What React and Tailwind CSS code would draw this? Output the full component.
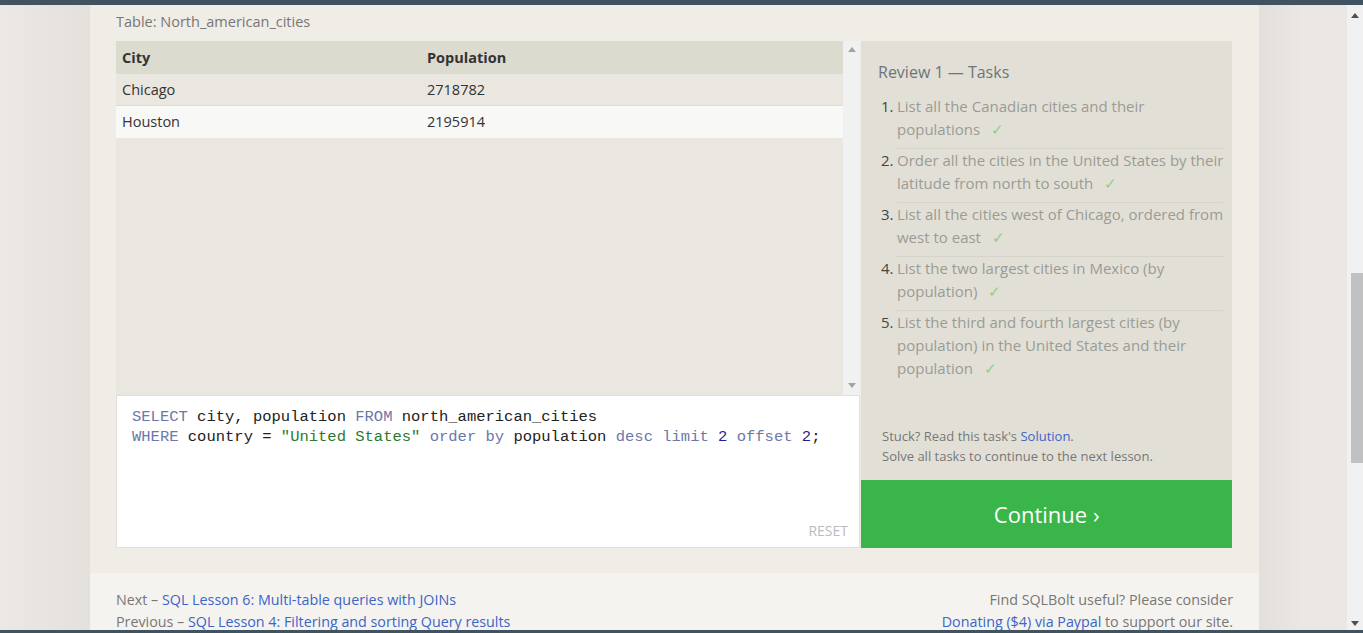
import React from "react";

const sans = { fontFamily: '"Open Sans", "Noto Sans", Arial, sans-serif' };

function Check() {
  return <span className="ml-[11px] text-[#8ccf8c]">✓</span>;
}

const tasks = [
  ["List all the Canadian cities and their", "populations"],
  ["Order all the cities in the United States by their", "latitude from north to south"],
  ["List all the cities west of Chicago, ordered from", "west to east"],
  ["List the two largest cities in Mexico (by", "population)"],
  ["List the third and fourth largest cities (by", "population) in the United States and their", "population"],
];

function Tri({ up }) {
  return (
    <svg width="8" height="5" viewBox="0 0 8 5">
      {up ? <path d="M0 5 L4 0 L8 5 Z" fill="#a3a3a3" /> : <path d="M0 0 L4 5 L8 0 Z" fill="#a3a3a3" />}
    </svg>
  );
}

export default function App() {
  return (
    <div className="w-[1363px] h-[633px] overflow-hidden flex flex-col bg-[#ebe7e4]" style={sans}>
      <div className="h-[5px] bg-[#3f5361] shrink-0" />
      <div className="flex flex-1 min-h-0">
        <div className="w-[90px] shrink-0 bg-gradient-to-r from-[#ece8e5] to-[#e4e0dc]" />
        <div className="w-[1169px] shrink-0 flex flex-col bg-[#f0ede6]">
          <div className="pl-[26px] pr-[27px] flex flex-col">
            <div className="h-[36px] flex items-center text-[14.5px] text-[#777] leading-none pb-[2px]">Table: North_american_cities</div>
            <div className="flex">
              <div className="w-[744px] flex flex-col">
                <div className="h-[354px] flex bg-[#e9e7df]">
                  <div className="w-[727px] flex flex-col">
                    <div className="h-[33px] flex items-center bg-[#dcdbd0] text-[14.5px] font-bold text-[#333]">
                      <div className="w-[311px] pl-[6px]">City</div>
                      <div>Population</div>
                    </div>
                    <div className="h-[32px] flex items-center text-[14.5px] text-[#333] border-b border-[#dddcd4] pt-[1px]">
                      <div className="w-[311px] pl-[6px]">Chicago</div>
                      <div>2718782</div>
                    </div>
                    <div className="h-[32px] flex items-center bg-[#f8f8f7] text-[14.5px] text-[#333]">
                      <div className="w-[311px] pl-[6px]">Houston</div>
                      <div>2195914</div>
                    </div>
                  </div>
                  <div className="w-[17px] bg-[#f1f1f1] flex flex-col items-center justify-between pt-[6px] pb-[7px]">
                    <Tri up />
                    <Tri />
                  </div>
                </div>
                <div className="h-[153px] bg-white border border-[#e2e0da] flex flex-col pl-[15px] pr-[11px] pt-[11px] pb-[9px]">
                  <div className="text-[15.5px] leading-[20px] text-[#222] whitespace-pre" style={{ fontFamily: '"Liberation Mono", "DejaVu Sans Mono", monospace' }}>
                    <div>
                      <span className="text-[#6c78a8]">SELECT</span> city, population <span className="text-[#6c78a8]">FROM</span> north_american_cities
                    </div>
                    <div>
                      <span className="text-[#6c78a8]">WHERE</span> country = <span className="text-[#2b7a2b]">"United States"</span>{" "}
                      <span className="text-[#6c78a8]">order by</span> population <span className="text-[#6c78a8]">desc limit</span>{" "}
                      <span className="text-[#1e1e8c]">2</span> <span className="text-[#6c78a8]">offset</span>{" "}
                      <span className="text-[#1e1e8c]">2</span>;
                    </div>
                  </div>
                  <div className="mt-auto self-end text-[14px] text-[#bbbbbb] leading-none">RESET</div>
                </div>
              </div>
              <div className="w-[372px] ml-[1px] flex flex-col">
                <div className="h-[439px] bg-[#e2e0d6] flex flex-col pl-[17px] pr-[9px] pt-[20px] pb-[14px]">
                  <div className="text-[16px] leading-[22px] text-[#6f747a]">Review 1 — Tasks</div>
                  <div className="mt-[12px] flex flex-col">
                    {tasks.map((lines, i) => (
                      <div key={i} className="flex">
                        <div className="w-[19px] pl-[3px] text-[15px] leading-[23px] text-[#444]">{i + 1}.</div>
                        <div className={"flex-1 pb-[7px] text-[15px] leading-[23px] text-[#9b9b95] " + (i < tasks.length - 1 ? "border-b border-[#d6d4ca]" : "")}>
                          {lines.map((l, j) => (
                            <div key={j} className="whitespace-nowrap">
                              {l}
                              {j === lines.length - 1 && <Check />}
                            </div>
                          ))}
                        </div>
                      </div>
                    ))}
                  </div>
                  <div className="mt-auto pl-[4px] text-[13px] leading-[20px] text-[#777]">
                    <div>
                      Stuck? Read this task's <span className="text-[#3b65c7]">Solution</span>.
                    </div>
                    <div>Solve all tasks to continue to the next lesson.</div>
                  </div>
                </div>
                <div className="h-[68px] bg-[#3ab54a] flex items-center justify-center text-white text-[22px]">Continue ›</div>
              </div>
            </div>
          </div>
          <div className="mt-[25px] flex-1 bg-[#f5f3ef] pl-[26px] pr-[26px] pt-[16px] flex justify-between text-[14.3px] leading-[22px] text-[#777]">
            <div>
              <div>
                Next – <span className="text-[#3b65c7]">SQL Lesson 6: Multi-table queries with JOINs</span>
              </div>
              <div>
                Previous – <span className="text-[#3b65c7]">SQL Lesson 4: Filtering and sorting Query results</span>
              </div>
            </div>
            <div className="text-right">
              <div>Find SQLBolt useful? Please consider</div>
              <div>
                <span className="text-[#3b65c7]">Donating ($4) via Paypal</span> to support our site.
              </div>
            </div>
          </div>
        </div>
        <div className="w-[88px] shrink-0 bg-gradient-to-r from-[#e3dfdc] via-[#ebe7e4] to-[#ebe7e4]" />
        <div className="w-[16px] shrink-0 bg-[#f1f1f1] flex flex-col items-center pt-[8px] relative">
          <svg width="8" height="5" viewBox="0 0 8 5"><path d="M0 5 L4 0 L8 5 Z" fill="#505050" /></svg>
          <div className="absolute left-[4px] right-0 top-[268px] h-[190px] bg-[#c1c1c1]" />
          <div className="mt-auto mb-[4px]">
            <svg width="8" height="5" viewBox="0 0 8 5"><path d="M0 0 L4 5 L8 0 Z" fill="#505050" /></svg>
          </div>
        </div>
      </div>
      <div className="h-[3px] bg-[#3f5361] shrink-0" />
    </div>
  );
}
